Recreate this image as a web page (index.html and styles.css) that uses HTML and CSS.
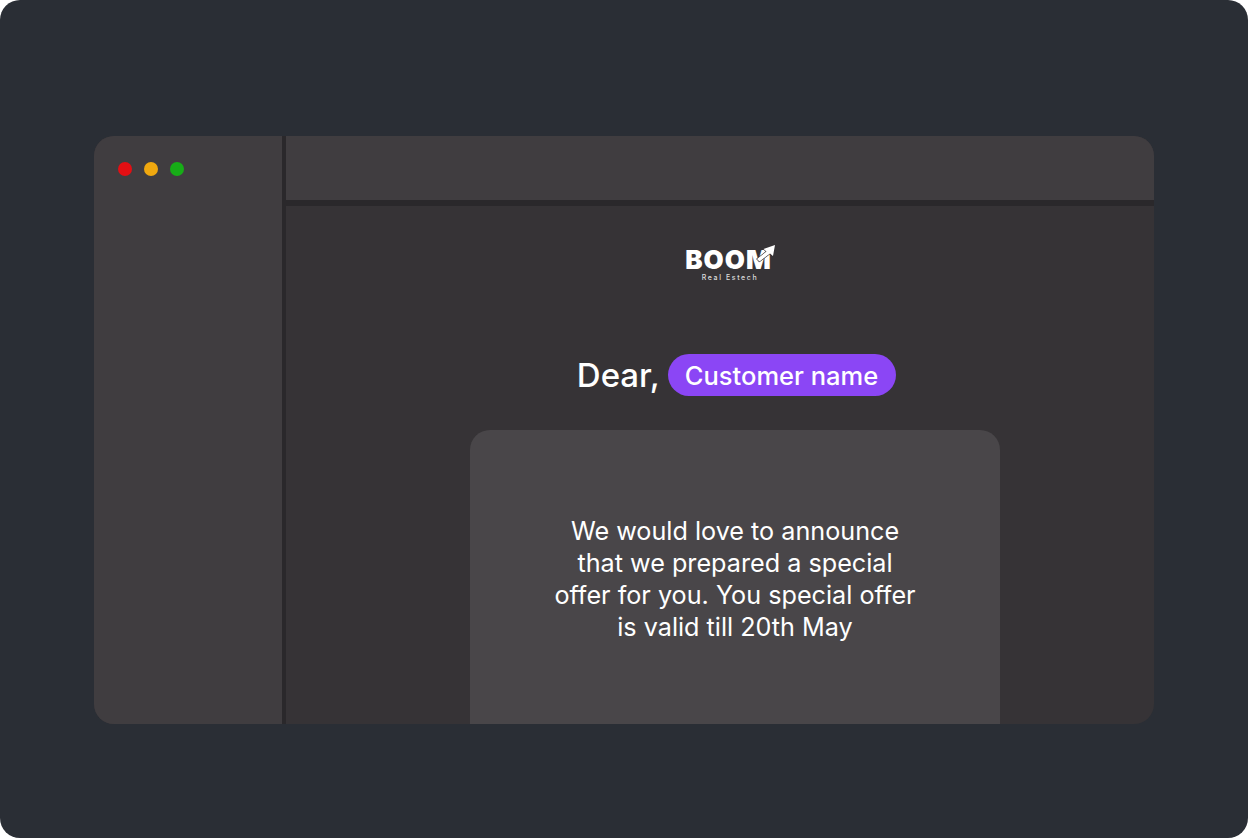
FILE: index.html
```html
<!DOCTYPE html>
<html lang="en">
<head>
<meta charset="utf-8">
<title>Boom Real Estech</title>
<link rel="stylesheet" href="styles.css">
</head>
<body>
<div class="frame">
  <div class="window">
    <aside class="sidebar">
      <div class="dots">
        <span class="dot red"></span>
        <span class="dot amber"></span>
        <span class="dot green"></span>
      </div>
    </aside>
    <main class="main">
      <div class="topbar"></div>
      <div class="content">
        <div class="logo">
          <div class="wordmark">BOOM
            <svg class="arrow" viewBox="0 0 20 16" aria-hidden="true"><path class="arrow-shape" d="M2 14 L11.5 6.5 L8.5 4 L20 0 L18 11 L15 8.5 L4.5 16.5 Z"/></svg>
          </div>
          <div class="tagline">Real Estech</div>
        </div>
        <div class="greeting"><span>Dear,</span><span class="pill">Customer name</span></div>
        <div class="card">
          <p class="message">We would love to announce<br>that we prepared a special<br>offer for you. You special offer<br>is valid till 20th May</p>
        </div>
      </div>
    </main>
  </div>
</div>
</body>
</html>
```
FILE: styles.css
```css
* { box-sizing: border-box; }
html, body { margin: 0; padding: 0; background: #fff; }
body { font-family: "Inter", "Liberation Sans", sans-serif; color: #fff; }
.frame {
  width: 1248px; height: 838px;
  background: #2a2e35;
  border-radius: 20px;
  padding: 136px 94px 114px;
}
.window {
  display: flex;
  width: 1060px; height: 588px;
  border-radius: 20px;
  overflow: hidden;
  background: #363336;
}
.sidebar {
  width: 188px; flex: none;
  background: #403d40;
  padding: 26px 24px;
}
.dots { display: flex; gap: 12px; }
.dot { width: 14px; height: 14px; border-radius: 50%; }
.red { background: #e30f13; }
.amber { background: #f0a80f; }
.green { background: #17ad17; }
.main {
  flex: 1;
  display: flex; flex-direction: column;
  border-left: 4px solid #2a282b;
}
.topbar {
  height: 70px; flex: none;
  background: #403d40;
  border-bottom: 6px solid #2a282b;
}
.content {
  flex: 1;
  display: flex; flex-direction: column; align-items: center;
  overflow: hidden;
  padding: 40px 0 0 30px;
}
.logo { display: flex; flex-direction: column; align-items: center; margin-left: -10px; }
.wordmark {
  position: relative;
  font-weight: 900;
  font-size: 26px;
  line-height: 28px;
  height: 26px;
  letter-spacing: 1px;
  padding-right: 3px;
}
.arrow { position: absolute; right: 0; top: -1px; width: 20px; height: 16px; overflow: visible; }
.arrow-shape { fill: #fff; stroke: #363336; stroke-width: 1.2px; paint-order: stroke; }
.tagline {
  font-size: 7px; line-height: 8px;
  letter-spacing: 1.6px;
  color: #ddd;
  font-weight: 500;
  margin-top: 2px;
}
.greeting {
  display: flex; align-items: center; gap: 8px;
  margin-top: 72px;
  margin-left: 3px;
  font-size: 33px;
  font-weight: 500;
}
.pill {
  display: flex; align-items: center;
  height: 42px;
  padding: 1px 18px 0 17px;
  border-radius: 21px;
  background: #8b46f5;
  font-size: 25.5px;
  font-weight: 500;
}
.card {
  width: 530px; flex: 1;
  margin-top: 34px;
  background: #494649;
  border-radius: 20px 20px 0 0;
  display: flex; justify-content: center;
  padding-top: 85px;
}
.message {
  margin: 0;
  font-size: 25.2px;
  line-height: 32px;
  text-align: center;
  white-space: nowrap;
}
```
